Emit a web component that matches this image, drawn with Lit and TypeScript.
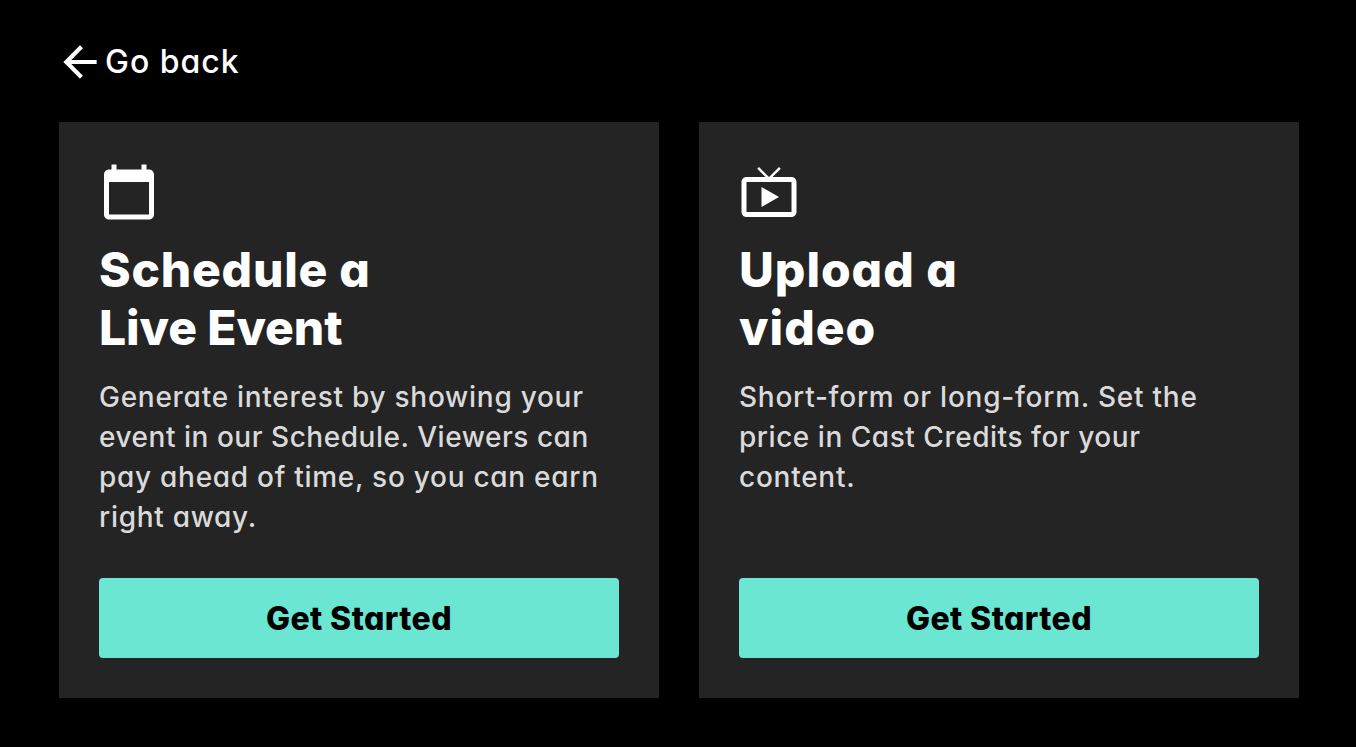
import { LitElement, html, css, svg } from 'lit';
import { customElement, property } from 'lit/decorators.js';
import { styleMap } from 'lit/directives/style-map.js';

interface Line {
  text: string;
  tracking: number;
}

const icons = {
  back: svg`<path d="M20 11H7.83l5.59-5.59L12 4l-8 8 8 8 1.41-1.41L7.83 13H20v-2z" />`,
  calendar: svg`<path d="M20 3h-1V1h-2v2H7V1H5v2H4c-1.1 0-2 .9-2 2v16c0 1.1.9 2 2 2h16c1.1 0 2-.9 2-2V5c0-1.1-.9-2-2-2zm0 18H4V8h16v13z" />`,
  tv: svg`<path d="M21 6h-7.59l3.29-3.29L16 2l-4 4-4-4-.71.71L10.59 6H3c-1.1 0-2 .89-2 2v12c0 1.1.9 2 2 2h18c1.1 0 2-.9 2-2V8c0-1.11-.9-2-2-2zm0 14H3V8h18v12zM9 10v8l7-4z" />`,
};

const renderLine = (line: Line) => html`
  <span class="line" style=${styleMap({ letterSpacing: `${line.tracking}px` })}
    >${line.text}</span
  >
`;

@customElement('option-card')
export class OptionCard extends LitElement {
  @property({ type: String })
  icon: 'calendar' | 'tv' = 'calendar';

  @property({ attribute: false })
  heading: Line[] = [];

  @property({ attribute: false })
  description: Line[] = [];

  render() {
    return html`
      <svg class="icon" viewBox="0 0 24 24">${icons[this.icon]}</svg>
      <h2>${this.heading.map(renderLine)}</h2>
      <p>${this.description.map(renderLine)}</p>
      <button>Get Started</button>
    `;
  }

  static styles = css`
    :host {
      display: flex;
      flex-direction: column;
      box-sizing: border-box;
      padding: 40px;
      background: #242424;
    }

    .icon {
      width: 60px;
      height: 60px;
      fill: #fff;
    }

    .line {
      display: block;
      white-space: nowrap;
    }

    h2 {
      margin: 19px 0 0;
      color: #fff;
      font-size: 48px;
      font-weight: 800;
      line-height: 58px;
    }

    p {
      margin: 20px 0 0;
      color: #dadada;
      font-size: 28px;
      font-weight: 500;
      line-height: 40px;
    }

    button {
      height: 80px;
      margin-top: auto;
      padding: 0;
      border: none;
      border-radius: 4px;
      background: #6be6d2;
      color: #000;
      font: inherit;
      font-feature-settings: inherit;
      font-size: 32px;
      font-weight: 800;
      letter-spacing: 0.4px;
      cursor: pointer;
    }
  `;
}

@customElement('app-root')
export class AppRoot extends LitElement {
  private cards = [
    {
      icon: 'calendar',
      heading: [
        { text: 'Schedule a', tracking: 0.75 },
        { text: 'Live Event', tracking: -0.1 },
      ],
      description: [
        { text: 'Generate interest by showing your', tracking: 0.73 },
        { text: 'event in our Schedule. Viewers can', tracking: 0.53 },
        { text: 'pay ahead of time, so you can earn', tracking: 0.72 },
        { text: 'right away.', tracking: 0.7 },
      ],
    },
    {
      icon: 'tv',
      heading: [
        { text: 'Upload a', tracking: 0.95 },
        { text: 'video', tracking: 1 },
      ],
      description: [
        { text: 'Short-form or long-form. Set the', tracking: 0.75 },
        { text: 'price in Cast Credits for your', tracking: 0.53 },
        { text: 'content.', tracking: 0.75 },
      ],
    },
  ];

  render() {
    return html`
      <a class="back">
        <svg viewBox="0 0 24 24">${icons.back}</svg>
        <span>Go back</span>
      </a>
      <div class="cards">
        ${this.cards.map(
          (card) => html`
            <option-card
              .icon=${card.icon as 'calendar' | 'tv'}
              .heading=${card.heading}
              .description=${card.description}
            ></option-card>
          `,
        )}
      </div>
    `;
  }

  static styles = css`
    :host {
      display: flex;
      flex-direction: column;
      box-sizing: border-box;
      height: 100vh;
      padding: 37px 57px 49px 59px;
      background: #000;
      font-family: Inter, 'Liberation Sans', sans-serif;
      font-feature-settings: 'cv11';
    }

    .back {
      display: flex;
      align-items: center;
      align-self: flex-start;
      height: 50px;
      margin-left: -4px;
      color: #fff;
      font-size: 32px;
      font-weight: 500;
      letter-spacing: 1px;
      cursor: pointer;
    }

    .back span {
      padding-bottom: 1px;
    }

    .back svg {
      width: 50px;
      height: 50px;
      fill: #fff;
    }

    .cards {
      display: grid;
      grid-template-columns: 1fr 1fr;
      gap: 40px;
      flex: 1;
      margin-top: 35px;
    }
  `;
}

declare global {
  interface HTMLElementTagNameMap {
    'app-root': AppRoot;
    'option-card': OptionCard;
  }
}
